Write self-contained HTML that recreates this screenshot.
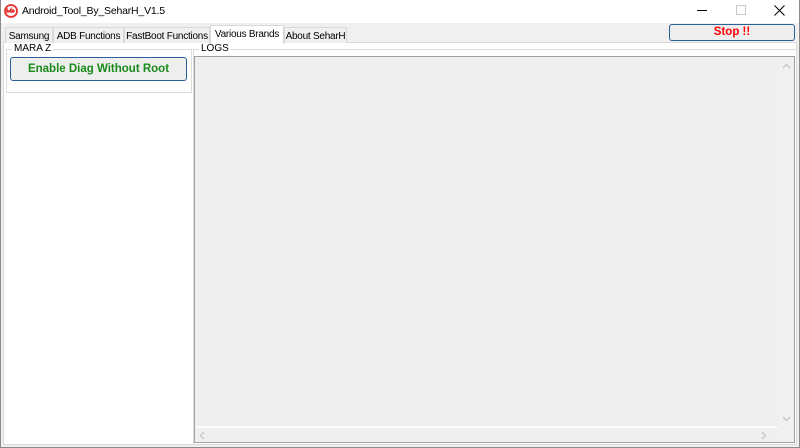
<!DOCTYPE html>
<html><head><meta charset="utf-8"><style>
*{margin:0;padding:0;box-sizing:border-box}
body{width:800px;height:448px;overflow:hidden;background:#f0f0f0;font-family:"Liberation Sans",sans-serif;font-size:10px;color:#000;position:relative}
.win{position:absolute;left:0;top:0;width:800px;height:448px;border:1px solid #8a8a8a;border-top:none}
.title{position:absolute;left:0;top:0;width:800px;height:23px;background:#fff}
.title span{position:absolute;left:22px;top:5px;font-size:10.5px;letter-spacing:-0.2px}
.tabs{position:absolute;top:25px;left:5px;height:18px}
.tab{position:absolute;top:2px;height:16px;border:1px solid #d9d9d9;border-bottom:none;background:#f0f0f0;padding:3px 0 0 0;text-align:center;font-size:10px;letter-spacing:-0.25px;white-space:nowrap;overflow:hidden}
.tab.sel{top:0;height:19px;padding-top:3px;background:#fff;z-index:2}
.page{position:absolute;left:3px;top:42px;width:794px;height:403px;background:#fff;border:1px solid #d9d9d9}
.gb{position:absolute;border:1px solid #dcdcdc}
.gbl{position:absolute;top:-7px;left:5px;background:#fff;padding:0 2px;font-size:10px}
.btn{position:absolute;border:1px solid #2b5f9a;border-radius:3px;background:#eeeeee;font-weight:bold;text-align:center}
.log{position:absolute;left:194px;top:56px;width:585px;height:387px;background:#efefef;border:1px solid #a0a0a0;border-right:none}
.vs{position:absolute;left:778px;top:56px;width:17px;height:387px;background:#f0f0f0;border:1px solid #a0a0a0;border-left:none}
</style></head><body>
<div class="title">
<svg style="position:absolute;left:4px;top:4px" width="14" height="14" viewBox="0 0 14 14"><circle cx="7" cy="7" r="6" fill="none" stroke="#e53030" stroke-width="1.8"/><path d="M3 9V5l2 3 2-3v4M7 7h4M9 5v4" stroke="#e53030" stroke-width="1.4" fill="none"/></svg>
<span>Android_Tool_By_SeharH_V1.5</span>
<div style="position:absolute;left:697px;top:10px;width:10px;height:1px;background:#000"></div>
<div style="position:absolute;left:736px;top:5px;width:10px;height:10px;border:1px solid #c8c8c8"></div>
<svg style="position:absolute;left:774px;top:5px" width="11" height="11" viewBox="0 0 11 11"><path d="M0.5 0.5L10.5 10.5M10.5 0.5L0.5 10.5" stroke="#000" stroke-width="1"/></svg>
</div>
<div class="page"></div>
<div class="tabs">
<div class="tab" style="left:0;width:48px">Samsung</div>
<div class="tab" style="left:48px;width:71px">ADB Functions</div>
<div class="tab" style="left:119px;width:86px">FastBoot Functions</div>
<div class="tab sel" style="left:205px;width:74px">Various Brands</div>
<div class="tab" style="left:279px;width:63px">About SeharH</div>
</div>
<div class="btn" style="left:669px;top:24px;width:126px;height:17px;color:#ff0000;font-size:11.5px;line-height:15px">Stop !!</div>
<div class="gb" style="left:6px;top:49px;width:186px;height:44px"><div class="gbl">MARA Z</div></div>
<div class="btn" style="left:10px;top:57px;width:177px;height:24px;color:#1a8a1a;font-size:11.5px;line-height:22px">Enable Diag Without Root</div>
<div class="gb" style="left:193px;top:49px;width:604px;height:395px;border-bottom:none;border-right:none"><div class="gbl">LOGS</div></div>
<div class="log"></div>
<div class="vs"></div>
<svg style="position:absolute;left:782px;top:63px" width="9" height="6"><path d="M1 5L4.5 1.5 8 5" stroke="#bbb" fill="none"/></svg>
<svg style="position:absolute;left:782px;top:416px" width="9" height="6"><path d="M1 1L4.5 4.5 8 1" stroke="#bbb" fill="none"/></svg>
<svg style="position:absolute;left:199px;top:431px" width="6" height="9"><path d="M5 1L1.5 4.5 5 8" stroke="#bbb" fill="none"/></svg>
<svg style="position:absolute;left:761px;top:431px" width="6" height="9"><path d="M1 1L4.5 4.5 1 8" stroke="#bbb" fill="none"/></svg>
<div style="position:absolute;left:195px;top:426px;width:583px;height:2px;background:#fafafa"></div>
<div class="win"></div>
</body></html>
